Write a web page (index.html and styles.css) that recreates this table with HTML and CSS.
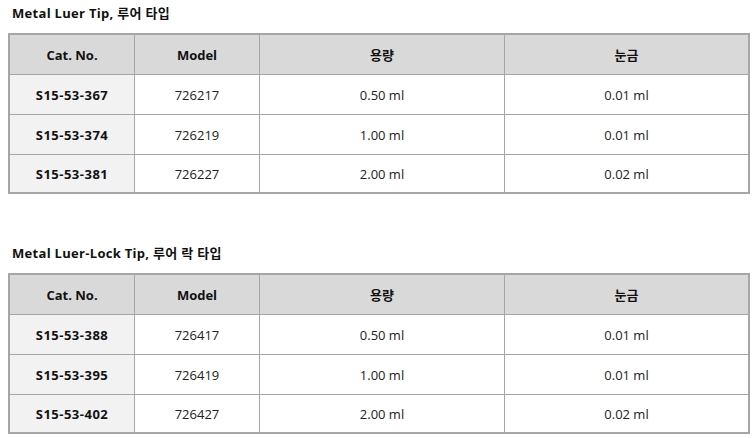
FILE: index.html
```html
<!DOCTYPE html>
<html lang="ko">
<head>
<meta charset="utf-8">
<link rel="stylesheet" href="styles.css">
</head>
<body>
<section class="block">
  <h3 class="title">Metal Luer Tip, 루어 타입</h3>
  <table class="spec">
    <thead>
      <tr><th>Cat. No.</th><th>Model</th><th>용량</th><th>눈금</th></tr>
    </thead>
    <tbody>
      <tr><td class="cat">S15-53-367</td><td>726217</td><td>0.50 ml</td><td>0.01 ml</td></tr>
      <tr><td class="cat">S15-53-374</td><td>726219</td><td>1.00 ml</td><td>0.01 ml</td></tr>
      <tr><td class="cat">S15-53-381</td><td>726227</td><td>2.00 ml</td><td>0.02 ml</td></tr>
    </tbody>
  </table>
</section>
<section class="block second">
  <h3 class="title">Metal Luer-Lock Tip, 루어 락 타입</h3>
  <table class="spec">
    <thead>
      <tr><th>Cat. No.</th><th>Model</th><th>용량</th><th>눈금</th></tr>
    </thead>
    <tbody>
      <tr><td class="cat">S15-53-388</td><td>726417</td><td>0.50 ml</td><td>0.01 ml</td></tr>
      <tr><td class="cat">S15-53-395</td><td>726419</td><td>1.00 ml</td><td>0.01 ml</td></tr>
      <tr><td class="cat">S15-53-402</td><td>726427</td><td>2.00 ml</td><td>0.02 ml</td></tr>
    </tbody>
  </table>
</section>
</body>
</html>
```

FILE: styles.css
```css
html, body {
  margin: 0;
  padding: 0;
  background: #ffffff;
}
body {
  padding: 4px 8px 8px 8px;
  font-family: "Open Sans", "Noto Sans CJK KR", sans-serif;
  font-size: 13px;
  color: #222222;
}
.block {
  display: block;
}
.second {
  margin-top: 50px;
}
.title {
  margin: 0 0 11px 4px;
  font-size: 13px;
  line-height: 18px;
  font-weight: 700;
  letter-spacing: 0.3px;
  color: #111111;
}
.spec {
  width: 742px;
  border-collapse: separate;
  border-spacing: 0;
  border: 2px solid #a6a6a6;
  table-layout: fixed;
}
.spec th,
.spec td {
  height: 39px;
  padding: 0;
  text-align: center;
  vertical-align: middle;
  border-right: 1px solid #a6a6a6;
  border-bottom: 1px solid #a6a6a6;
  line-height: 18px;
}
.spec th:last-child,
.spec td:last-child {
  border-right: none;
}
.spec tbody tr:last-child td {
  border-bottom: none;
  height: 37px;
}
.spec th {
  background: #d9d9d9;
  font-weight: 700;
  color: #111111;
}
.spec th:nth-child(1) { width: 124px; }
.spec th:nth-child(2) { width: 124px; }
.spec th:nth-child(3) { width: 244px; }
.spec td.cat {
  background: #f2f2f2;
  font-weight: 700;
  letter-spacing: 0.5px;
  color: #111111;
}
```
